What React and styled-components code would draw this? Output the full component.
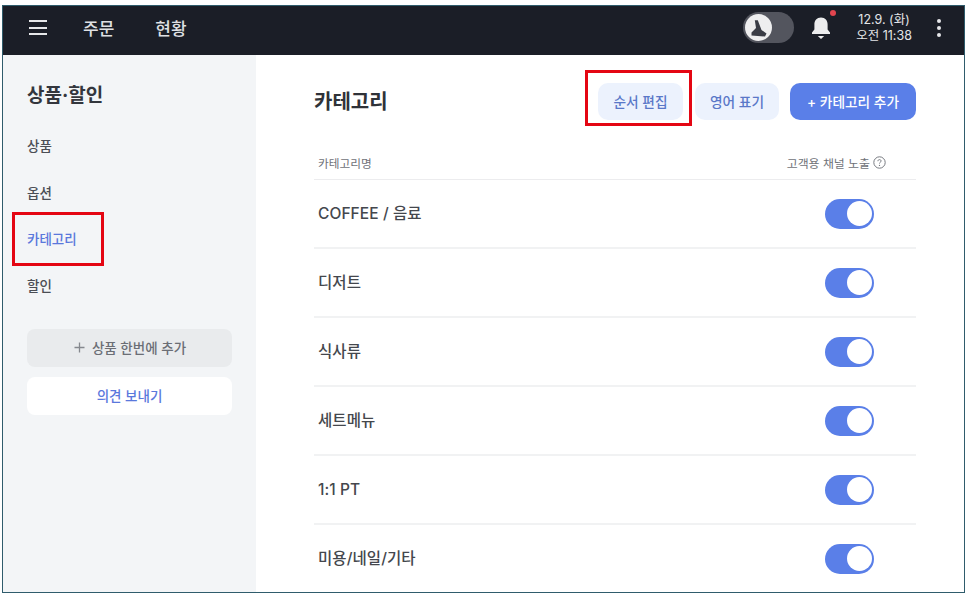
import React from "react";
import styled, { createGlobalStyle } from "styled-components";

const Global = createGlobalStyle`
  html, body { margin: 0; padding: 0; background: #fff; }
  body { font-family: "Inter", "Noto Sans CJK KR", sans-serif; }
  * { box-sizing: border-box; }
`;
const Frame = styled.div`
  position: relative;
  width: 963px;
  height: 588px;
  margin: 5px 0 0 2px;
  border: 1.5px solid #2f5c6c;
  display: flex;
  flex-direction: column;
  overflow: hidden;
  background: #fff;
`;
const TopBar = styled.header`
  height: 49px;
  flex: none;
  background: #1b1e27;
  display: flex;
  align-items: center;
  color: #e9eaec;
  padding: 0 23px 6px 26px;
`;
const MenuButton = styled.div`
  width: 18px;
  height: 15px;
  display: flex;
  flex-direction: column;
  justify-content: space-between;
  margin-right: 36px;
  span { display: block; height: 2px; background: #e6e7e9; }
`;
const TopLink = styled.span`
  font-size: 17px;
  font-weight: 500;
  margin-right: 41px;
  color: #dfe0e3;
`;
const Spacer = styled.div` flex: 1; `;
const ThemeToggle = styled.div`
  width: 51px;
  height: 31px;
  border-radius: 16px;
  background: #53555e;
  padding: 2px;
  margin-right: 16px;
  display: flex;
  svg { display: block; }
`;
const Bell = styled.div`
  position: relative;
  width: 22px;
  height: 26px;
  margin-right: 17px;
  svg { display: block; }
`;
const Dot = styled.i`
  position: absolute;
  top: -5px;
  right: -4px;
  width: 6px;
  height: 6px;
  border-radius: 50%;
  background: #e2454f;
`;
const Clock = styled.div`
  width: 70px;
  text-align: center;
  font-size: 12.5px;
  line-height: 16px;
  color: #e4e5e8;
  margin-right: 18px;
`;
const Kebab = styled.div`
  display: flex;
  flex-direction: column;
  gap: 3px;
  width: 4px;
  i { width: 4px; height: 4px; border-radius: 50%; background: #e6e7e9; }
`;
const Body = styled.div`
  flex: 1;
  min-height: 0;
  display: flex;
`;
const Side = styled.aside`
  width: 253px;
  flex: none;
  background: #f3f5f7;
  padding: 27px 24px 0 24px;
`;
const SideTitle = styled.h2`
  margin: 0 0 12px;
  font-size: 19px;
  line-height: 28px;
  font-weight: 700;
  color: #33363d;
`;
const SideItem = styled.div`
  height: 46.5px;
  display: flex;
  align-items: center;
  font-size: 13.5px;
  font-weight: 500;
  color: ${p => (p.$active ? "#5a78dc" : "#4b4e55")};
`;
const SideActions = styled.div`
  margin-top: 21px;
  display: flex;
  flex-direction: column;
  gap: 10px;
`;
const SideButton = styled.div`
  height: 38px;
  border-radius: 8px;
  display: flex;
  align-items: center;
  justify-content: center;
  gap: 6px;
  padding-bottom: 2px;
  font-size: 13.5px;
  font-weight: 500;
  background: ${p => (p.$ghost ? "#fff" : "#e9ebed")};
  color: ${p => (p.$ghost ? "#5a78dc" : "#6b6e75")};
  svg { display: block; }
`;
const Main = styled.main`
  flex: 1;
  padding: 28px 48px 0 58px;
`;
const TitleRow = styled.div`
  display: flex;
  align-items: center;
  height: 37px;
  margin-bottom: 25px;
`;
const Title = styled.h1`
  margin: -3px 0 0;
  flex: 1;
  font-size: 20px;
  font-weight: 700;
  color: #2f3238;
`;
const Btn = styled.div`
  height: 37px;
  width: ${p => p.$w}px;
  margin-left: ${p => p.$ml || 0}px;
  border-radius: 10px;
  display: flex;
  align-items: center;
  justify-content: center;
  font-size: 13.7px;
  font-weight: 500;
  padding-bottom: 1px;
  background: ${p => (p.$primary ? "#5a7fe8" : "#ecf2fd")};
  color: ${p => (p.$primary ? "#fff" : "#5a78c8")};
`;
const TableHead = styled.div`
  height: 35px;
  display: flex;
  align-items: center;
  justify-content: space-between;
  padding: 0 35px 0 4px;
  border-bottom: 1px solid #ececee;
  font-size: 11.7px;
  color: #6f7278;
`;
const HeadRight = styled.span`
  display: flex;
  align-items: center;
  gap: 3px;
  margin-right: -5px;
  font-size: 11.9px;
  svg { display: block; }
`;
const Row = styled.div`
  height: 69px;
  flex: none;
  display: flex;
  align-items: center;
  justify-content: space-between;
  padding: 0 42px 0 4px;
  border-bottom: 2px solid #f1f2f3;
  font-size: 15.5px;
  font-weight: 500;
  color: #44474d;
`;
const RowLabel = styled.span`
  line-height: 20px;
  letter-spacing: 0.005em;
`;
const Toggle = styled.div`
  width: 49px;
  height: 30px;
  border-radius: 15px;
  background: #5a7fe8;
  display: flex;
  align-items: center;
  justify-content: flex-end;
  padding-right: 2.5px;
  i { width: 25px; height: 25px; border-radius: 50%; background: #fff; }
`;
const Annotation = styled.div`
  position: absolute;
  left: ${p => p.$x}px;
  top: ${p => p.$y}px;
  width: ${p => p.$w}px;
  height: ${p => p.$h}px;
  border: 3px solid #e40613;
`;

const rows = ["COFFEE / 음료", "디저트", "식사류", "세트메뉴", "1:1 PT", "미용/네일/기타"];

export default function App() {
  return (
    <>
      <Global />
      <Frame>
        <TopBar>
          <MenuButton><span /><span /><span /></MenuButton>
          <TopLink>주문</TopLink>
          <TopLink>현황</TopLink>
          <Spacer />
          <ThemeToggle>
            <svg width="27" height="27" viewBox="0 0 27 27">
              <circle cx="13.5" cy="13.5" r="13.5" fill="#eeeeef" />
              <path d="M9.8 6.3 L12.8 6.3 L16.5 16 L21.5 19.5 L20 22.5 L6.5 21.5 L6.5 18.5 L11 14 Z" fill="#3a3c45" />
            </svg>
          </ThemeToggle>
          <Bell>
            <svg width="22" height="26" viewBox="0 0 22 26">
              <path d="M11 2.5c-4.2 0-6.6 3-6.6 7v5L2 17.6V19h18v-1.4l-2.4-3.1v-5c0-4-2.4-7-6.6-7z" fill="#ececed" />
              <path d="M7.8 21h6.4L11 24z" fill="#ececed" />
            </svg>
            <Dot />
          </Bell>
          <Clock>12.9. (화)<br />오전 11:38</Clock>
          <Kebab><i /><i /><i /></Kebab>
        </TopBar>
        <Body>
          <Side>
            <SideTitle>상품·할인</SideTitle>
            <SideItem>상품</SideItem>
            <SideItem>옵션</SideItem>
            <SideItem $active>카테고리</SideItem>
            <SideItem>할인</SideItem>
            <SideActions>
              <SideButton>
                <svg width="13" height="13" viewBox="0 0 13 13">
                  <path d="M6.5 1.5v10M1.5 6.5h10" stroke="#85888e" strokeWidth="1.3" />
                </svg>
                상품 한번에 추가
              </SideButton>
              <SideButton $ghost>의견 보내기</SideButton>
            </SideActions>
          </Side>
          <Main>
            <TitleRow>
              <Title>카테고리</Title>
              <Btn $w={85}>순서 편집</Btn>
              <Btn $w={84} $ml={12}>영어 표기</Btn>
              <Btn $w={126} $ml={11} $primary>+ 카테고리 추가</Btn>
            </TitleRow>
            <TableHead>
              <span>카테고리명</span>
              <HeadRight>
                고객용 채널 노출
                <svg width="13" height="13" viewBox="0 0 13 13">
                  <circle cx="6.5" cy="6.5" r="5.7" fill="none" stroke="#777a80" strokeWidth="1" />
                  <path d="M4.9 5.2c0-1 .7-1.6 1.6-1.6s1.6.6 1.6 1.4c0 1.2-1.6 1.2-1.6 2.5" fill="none" stroke="#777a80" strokeWidth="1" />
                  <circle cx="6.5" cy="9.4" r=".65" fill="#777a80" />
                </svg>
              </HeadRight>
            </TableHead>
            {rows.map(r => (
              <Row key={r}>
                <RowLabel>{r}</RowLabel>
                <Toggle><i /></Toggle>
              </Row>
            ))}
          </Main>
        </Body>
        <Annotation $x={582} $y={64} $w={107} $h={56} />
        <Annotation $x={9} $y={206} $w={92} $h={54} />
      </Frame>
    </>
  );
}
